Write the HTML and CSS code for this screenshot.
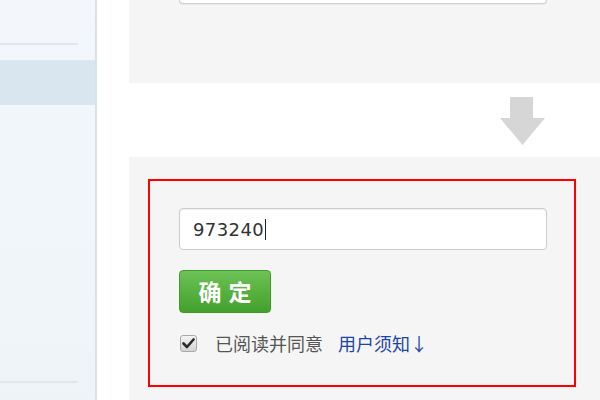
FILE: index.html
```html
<!DOCTYPE html>
<html lang="zh-CN">
<head>
<meta charset="utf-8">
<link rel="stylesheet" href="styles.css">
</head>
<body>
<div class="page">
  <aside class="sidebar">
    <div class="side-line first"></div>
    <div class="side-active"></div>
    <div class="side-fill"></div>
    <div class="side-line last"></div>
  </aside>
  <main class="main">
    <section class="panel panel-top">
      <div class="prev-input"></div>
    </section>
    <div class="arrow-row">
      <svg class="arrow" width="45" height="48" viewBox="0 0 45 48">
        <path d="M10 0 H33 V21 H45 L22.5 48 L0 21 H10 Z" fill="#d6d6d6"/>
      </svg>
    </div>
    <section class="panel panel-bottom">
      <div class="redbox">
        <div class="code-input"><span class="code-text">973240</span><span class="caret"></span></div>
        <button class="ok-btn">确定</button>
        <div class="agree">
          <span class="checkbox">
            <svg width="13" height="11" viewBox="0 0 13 11"><path d="M1.5 5.5 L5 9 L11.5 1.5" fill="none" stroke="#2a2a2a" stroke-width="2.6" stroke-linecap="round" stroke-linejoin="round"/></svg>
          </span>
          <span class="agree-text">已阅读并同意</span>
          <a class="agree-link">用户须知↓</a>
        </div>
      </div>
    </section>
  </main>
</div>
</body>
</html>
```
FILE: styles.css
```css
html, body {
  margin: 0;
  padding: 0;
  width: 600px;
  height: 400px;
  overflow: hidden;
  background: #ffffff;
  font-family: "DejaVu Sans", "Noto Sans CJK SC", sans-serif;
}
.page {
  display: flex;
  width: 600px;
  height: 400px;
}
.sidebar {
  width: 95px;
  flex: none;
  border-right: 2px solid #d9e1e8;
  background: linear-gradient(180deg, #f3f7fb 0%, #f1f6fa 60%, #eef3f7 100%);
  display: flex;
  flex-direction: column;
}
.side-line {
  height: 2px;
  width: 78px;
  background: #e2e7eb;
}
.side-line.first {
  margin-top: 43px;
}
.side-active {
  margin-top: 15px;
  height: 44px;
  background: #d9e6f0;
  border-top: 1px solid #dde8f0;
}
.side-fill {
  flex: 1;
}
.side-line.last {
  margin-bottom: 17px;
}
.main {
  flex: 1;
  display: flex;
  flex-direction: column;
  padding-left: 32px;
}
.panel {
  background: #f5f5f5;
}
.panel-top {
  height: 83px;
  padding-left: 50px;
}
.prev-input {
  width: 366px;
  height: 3px;
  background: #ffffff;
  border: 1px solid #cfcfcf;
  border-top: none;
  border-radius: 0 0 4px 4px;
  box-shadow: 0 1px 1px rgba(0,0,0,0.05);
}
.arrow-row {
  height: 74px;
  display: flex;
  justify-content: flex-end;
  align-items: flex-start;
  padding-right: 55px;
  padding-top: 14px;
  box-sizing: border-box;
}
.arrow {
  display: block;
}
.panel-bottom {
  flex: 1;
  padding: 22px 0 0 19px;
}
.redbox {
  width: 395px;
  height: 177px;
  border: 2px solid #ff0000;
  padding: 27px 0 0 29px;
  box-sizing: content-box;
  display: flex;
  flex-direction: column;
  align-items: flex-start;
}
.code-input {
  width: 353px;
  height: 40px;
  background: #ffffff;
  border: 1px solid #cccccc;
  border-radius: 4px;
  box-shadow: inset 0 1px 1px rgba(0,0,0,0.06);
  display: flex;
  align-items: center;
  padding-left: 13px;
  box-sizing: content-box;
}
.code-text {
  font-family: "DejaVu Sans", sans-serif;
  font-size: 18px;
  color: #333333;
  letter-spacing: 0.4px;
}
.caret {
  width: 1px;
  height: 21px;
  background: #222;
  margin-left: 1px;
}
.ok-btn {
  margin-top: 20px;
  width: 92px;
  height: 43px;
  border: 1px solid #3f9a2a;
  border-radius: 4px;
  background: linear-gradient(180deg, #6ec257 0%, #57b140 50%, #44a12c 100%);
  color: #ffffff;
  font-family: "Noto Sans CJK SC", sans-serif;
  font-weight: 700;
  font-size: 23px;
  letter-spacing: 7px;
  padding: 0 0 0 7px;
  line-height: 1;
  display: flex;
  align-items: center;
  justify-content: center;
}
.agree {
  margin-top: 20px;
  display: flex;
  align-items: center;
  height: 20px;
}
.checkbox {
  width: 16px;
  height: 16px;
  border: 1px solid #a9a9a9;
  border-radius: 3px;
  background: linear-gradient(180deg, #f4f4f4 0%, #d4d4d4 100%);
  display: flex;
  align-items: center;
  justify-content: center;
  box-sizing: border-box;
  margin-left: 1px;
  width: 17px;
  height: 17px;
}
.checkbox svg {
  display: block;
}
.agree-text {
  margin-left: 18px;
  font-family: "Noto Sans CJK SC", sans-serif;
  font-size: 18px;
  color: #555555;
}
.agree-link {
  margin-left: 15px;
  font-family: "Noto Sans CJK SC", sans-serif;
  font-size: 18px;
  color: #1c45a8;
}
```
